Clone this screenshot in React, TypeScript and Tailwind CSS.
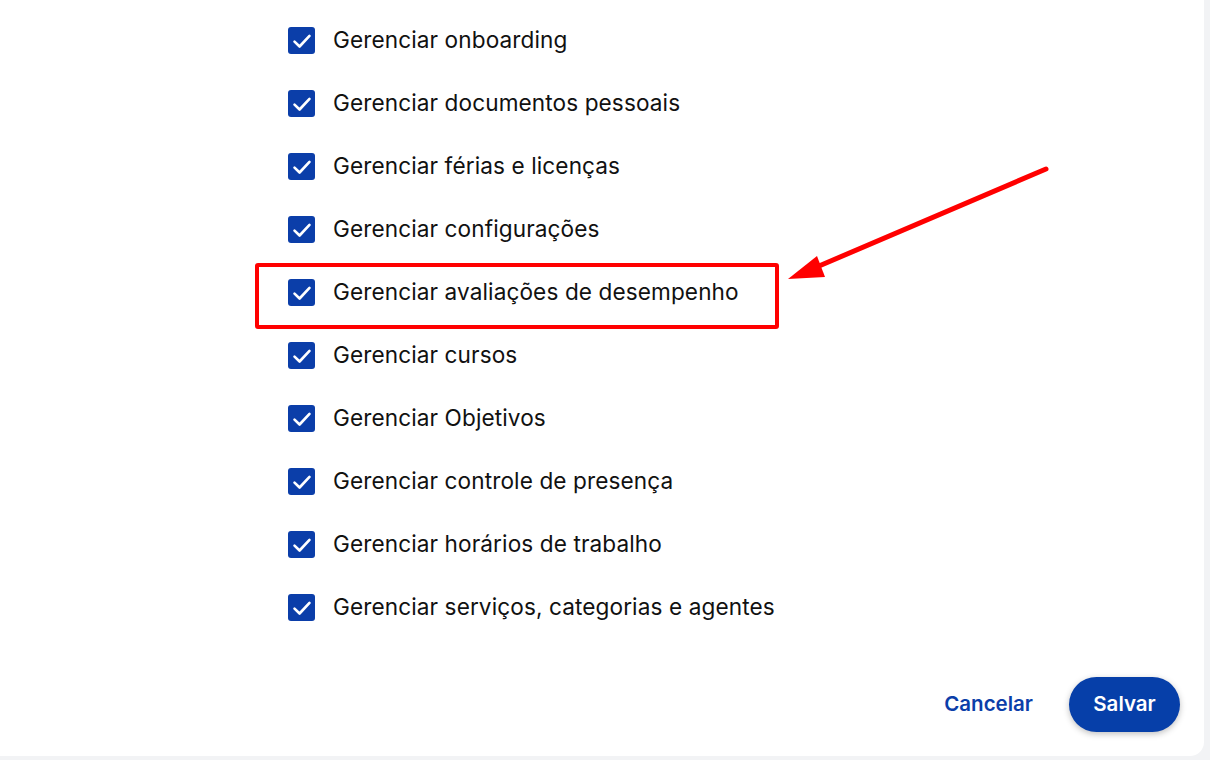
import React from "react";

const items = [
  "Gerenciar onboarding",
  "Gerenciar documentos pessoais",
  "Gerenciar férias e licenças",
  "Gerenciar configurações",
  "Gerenciar avaliações de desempenho",
  "Gerenciar cursos",
  "Gerenciar Objetivos",
  "Gerenciar controle de presença",
  "Gerenciar horários de trabalho",
  "Gerenciar serviços, categorias e agentes",
];

function Check() {
  return (
    <span className="flex h-[27px] w-[27px] shrink-0 items-center justify-center rounded-[3px] bg-[#0b3ea9]">
      <svg width="22" height="22" viewBox="0 0 20 20" fill="none">
        <path d="M3.2 10.6 L7.8 15 L16.8 5.4" stroke="white" strokeWidth="2.4" strokeLinecap="round" strokeLinejoin="round" />
      </svg>
    </span>
  );
}

export default function App() {
  return (
    <div className="relative h-[760px] w-[1210px] overflow-hidden bg-[#f2f3f5]" style={{ fontFamily: "Inter, 'Noto Sans', sans-serif" }}>
      <div className="flex h-[756px] w-[1204px] flex-col rounded-br-[14px] bg-white">
        <div className="flex flex-col pl-[288px] pt-[9px]">
          {items.map((t) => (
            <div key={t} className="flex h-[63px] items-center gap-[18px]">
              <Check />
              <span className="text-[22.6px] leading-none text-[#111] tracking-[0.1px]">{t}</span>
            </div>
          ))}
        </div>
        <div className="mt-[38px] flex items-center justify-end gap-[36px] pr-[24px]">
          <button className="text-[20.5px] font-semibold text-[#0b3ea9]">Cancelar</button>
          <button className="h-[55px] w-[111px] rounded-full bg-[#063fa9] text-[20.5px] font-semibold text-white shadow-[0_2px_6px_rgba(0,0,0,0.25)]">
            Salvar
          </button>
        </div>
      </div>
      <div className="pointer-events-none absolute left-[255px] top-[263px] h-[66px] w-[524px] rounded-[3px] border-[4px] border-[#ff0000]" />
      <svg className="pointer-events-none absolute left-0 top-0" width="1210" height="760">
        <line x1="1046" y1="169" x2="812" y2="269" stroke="#ff0000" strokeWidth="5" strokeLinecap="round" />
        <polygon points="788,279 817,256 825,277" fill="#ff0000" />
      </svg>
    </div>
  );
}
